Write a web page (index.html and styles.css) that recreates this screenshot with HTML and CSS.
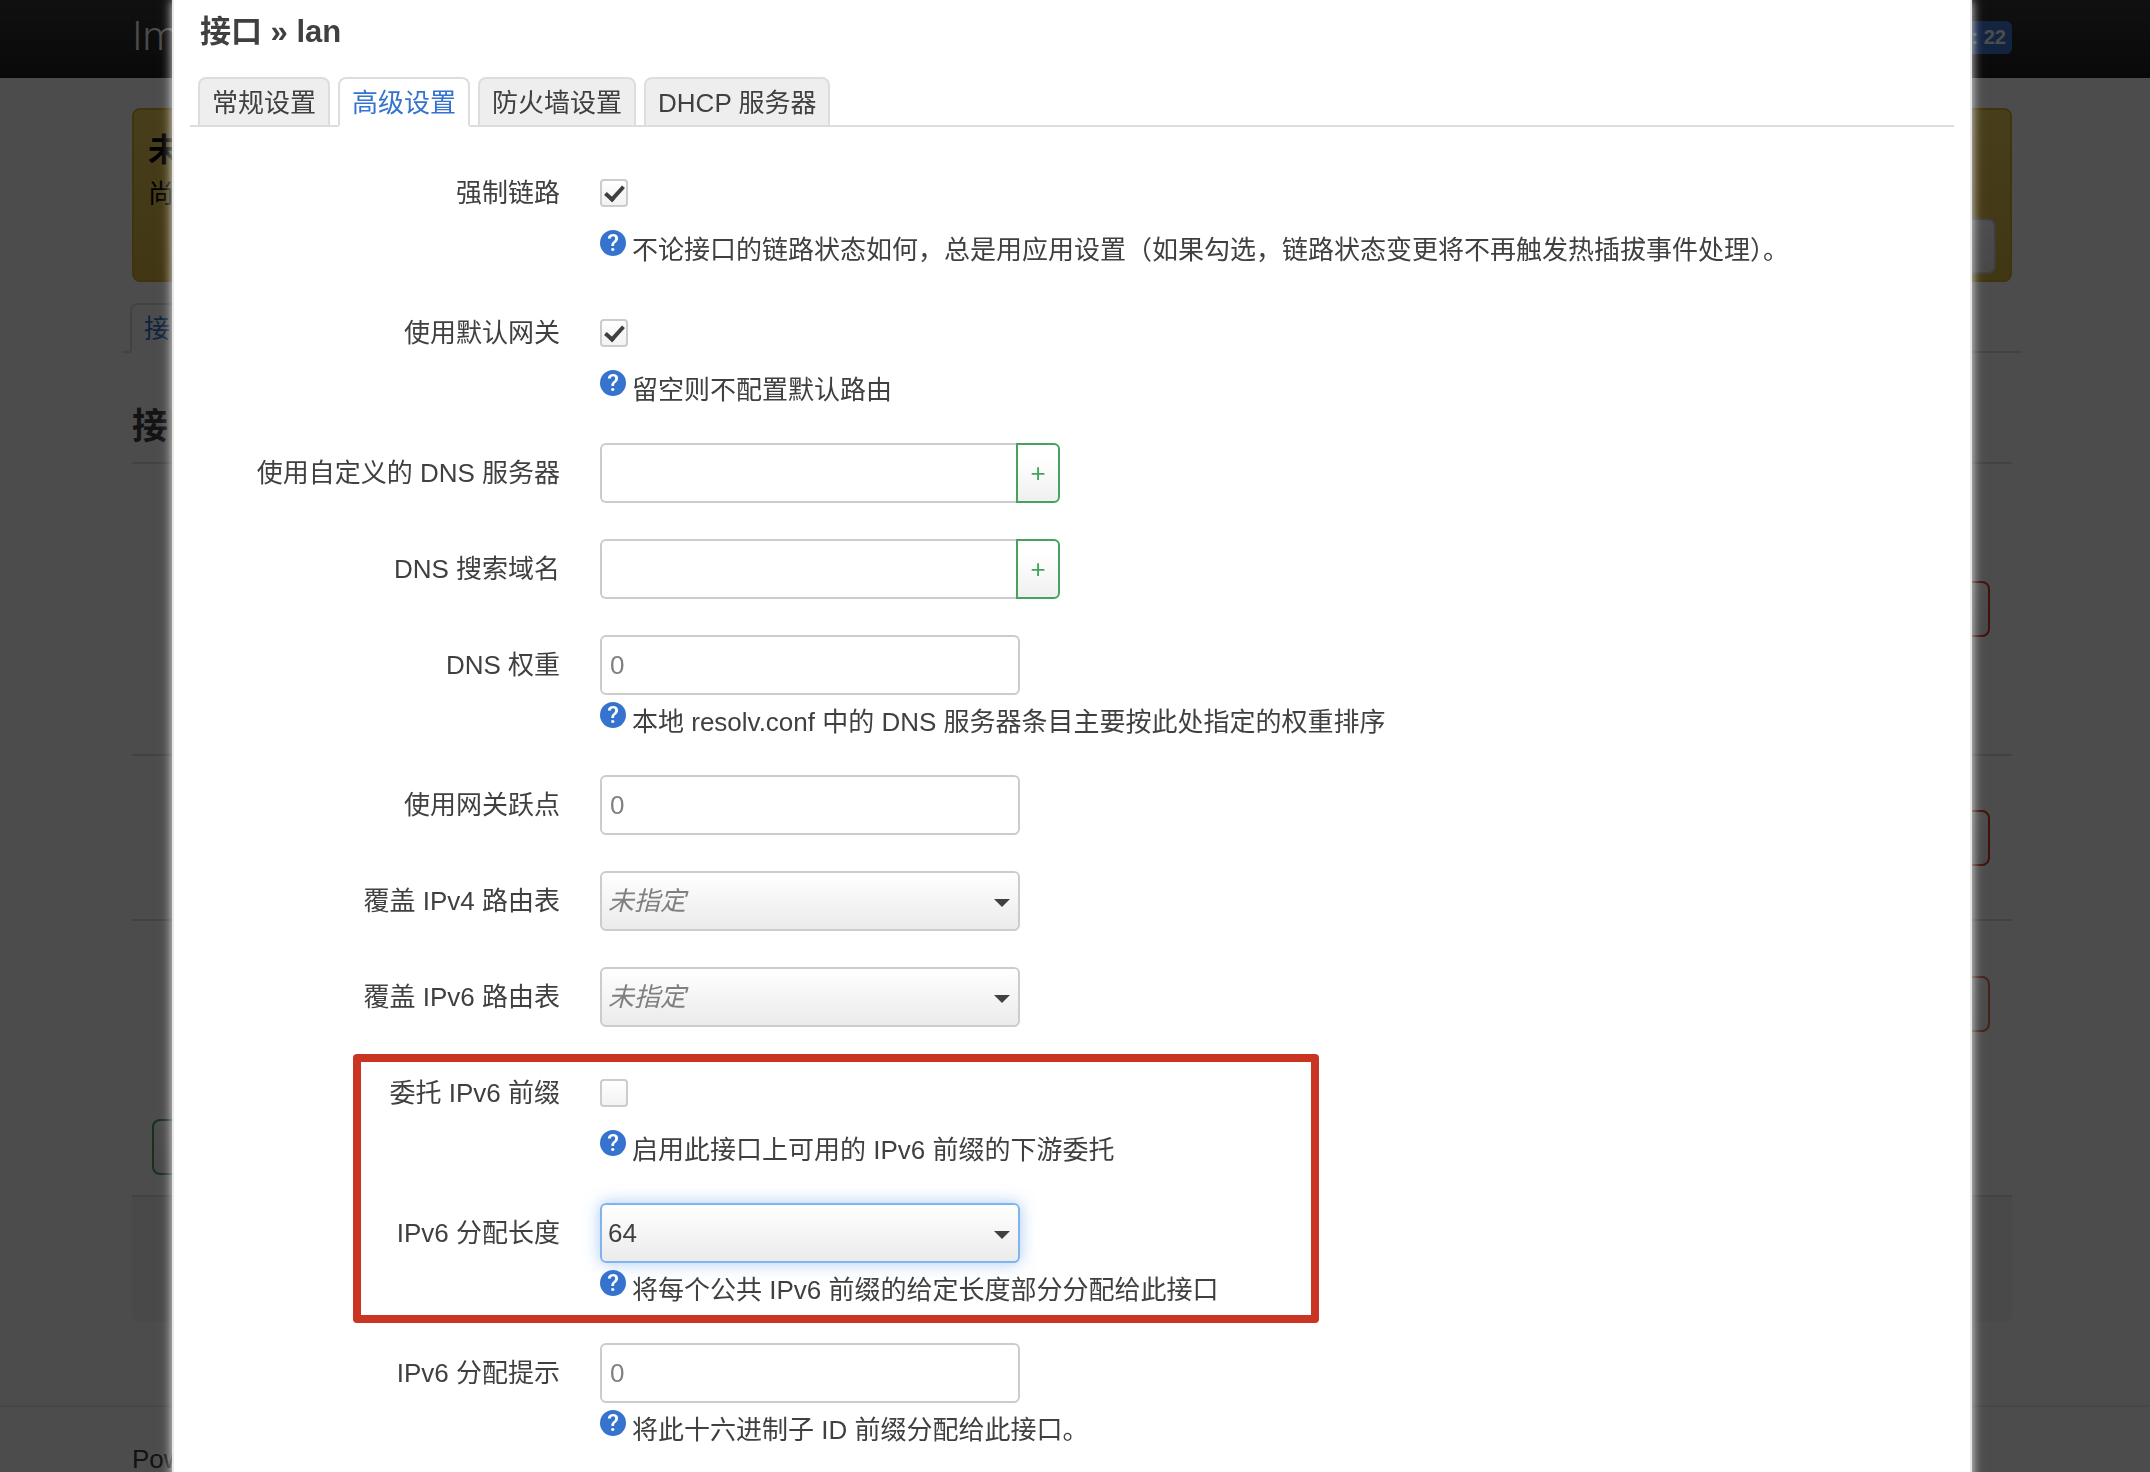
FILE: index.html
```html
<!DOCTYPE html>
<html lang="zh-CN">
<head>
  <meta charset="UTF-8" />
  <meta name="viewport" content="width=device-width, initial-scale=1.0" />
  <title>接口 - LuCI</title>
  <link rel="stylesheet" href="styles.css">
</head>
<body>
  <header class="topbar">
    <a class="brand" href="#">ImmortalWrt</a>
    <a class="badge" href="#">未保存的配置: 22</a>
  </header>

  <main class="page">
    <div class="notice">
      <h4>未设置密码！</h4>
      <p>尚未设置密码。</p>
      <div class="right"><button class="btn">转到密码配置页</button></div>
    </div>

    <ul class="tabs page-tabs">
      <li class="active"><a href="#">接口</a></li>
    </ul>

    <h2>接口</h2>
    <div class="iface tall"><button class="btn remove">删除</button></div>
    <div class="iface"><button class="btn remove">删除</button></div>
    <div class="iface last"><button class="btn remove" disabled>删除</button></div>
    <div class="create"><button class="btn add">添加新接口…</button></div>
    <div class="page-actions"></div>
  </main>
  <footer class="footer">Powered by LuCI</footer>

  <div class="overlay">
    <div class="modal" role="dialog" aria-labelledby="modal-title">
      <h4 id="modal-title">接口 » lan</h4>
      <ul class="tabs">
        <li><a href="#">常规设置</a></li>
        <li class="active"><a href="#">高级设置</a></li>
        <li><a href="#">防火墙设置</a></li>
        <li><a href="#">DHCP 服务器</a></li>
      </ul>

      <form class="form">
        <div class="row">
          <label for="force_link">强制链路</label>
          <div class="field">
            <div class="check"><input type="checkbox" id="force_link" checked></div>
            <div class="hint"><span class="help">?</span><span>不论接口的链路状态如何，总是用应用设置（如果勾选，链路状态变更将不再触发热插拔事件处理）。</span></div>
          </div>
        </div>
        <div class="row">
          <label for="defaultroute">使用默认网关</label>
          <div class="field">
            <div class="check"><input type="checkbox" id="defaultroute" checked></div>
            <div class="hint"><span class="help">?</span><span>留空则不配置默认路由</span></div>
          </div>
        </div>
        <div class="row">
          <label for="dns">使用自定义的 DNS 服务器</label>
          <div class="field">
            <div class="list"><input type="text" id="dns"><button type="button" aria-label="添加">+</button></div>
          </div>
        </div>
        <div class="row">
          <label for="dns_search">DNS 搜索域名</label>
          <div class="field">
            <div class="list"><input type="text" id="dns_search"><button type="button" aria-label="添加">+</button></div>
          </div>
        </div>
        <div class="row">
          <label for="dns_metric">DNS 权重</label>
          <div class="field">
            <input type="text" id="dns_metric" placeholder="0">
            <div class="hint"><span class="help">?</span><span>本地 resolv.conf 中的 DNS 服务器条目主要按此处指定的权重排序</span></div>
          </div>
        </div>
        <div class="row">
          <label for="metric">使用网关跃点</label>
          <div class="field"><input type="text" id="metric" placeholder="0"></div>
        </div>
        <div class="row">
          <label for="ip4table">覆盖 IPv4 路由表</label>
          <div class="field">
            <div class="select"><select id="ip4table" class="unset"><option>未指定</option></select></div>
          </div>
        </div>
        <div class="row">
          <label for="ip6table">覆盖 IPv6 路由表</label>
          <div class="field">
            <div class="select"><select id="ip6table" class="unset"><option>未指定</option></select></div>
          </div>
        </div>

        <div class="marked">
          <div class="row">
            <label for="delegate">委托 IPv6 前缀</label>
            <div class="field">
              <div class="check"><input type="checkbox" id="delegate"></div>
              <div class="hint"><span class="help">?</span><span>启用此接口上可用的 IPv6 前缀的下游委托</span></div>
            </div>
          </div>
          <div class="row">
            <label for="ip6assign">IPv6 分配长度</label>
            <div class="field">
              <div class="select"><select id="ip6assign" class="focused"><option>64</option></select></div>
              <div class="hint"><span class="help">?</span><span>将每个公共 IPv6 前缀的给定长度部分分配给此接口</span></div>
            </div>
          </div>
        </div>

        <div class="row">
          <label for="ip6hint">IPv6 分配提示</label>
          <div class="field">
            <input type="text" id="ip6hint" placeholder="0">
            <div class="hint"><span class="help">?</span><span>将此十六进制子 ID 前缀分配给此接口。</span></div>
          </div>
        </div>
      </form>
    </div>
  </div>
</body>
</html>
```
FILE: styles.css
```css
*, *::before, *::after {
  box-sizing: border-box;
}
body {
  margin: 0;
  overflow: hidden;
  background: #fff;
  color: #404040;
  font-family: "Liberation Sans", "Noto Sans CJK SC", sans-serif;
  font-size: 26px;
  line-height: 36px;
}
h2, h4, p, ul {
  margin: 0;
  padding: 0;
}
a {
  color: #3573cf;
  text-decoration: none;
}
input, select, button {
  font: inherit;
  color: inherit;
}

/* page behind the dialog */
.topbar {
  display: flex;
  justify-content: space-between;
  align-items: center;
  height: 78px;
  padding: 0 138px 4px 132px;
  background: linear-gradient(#383838, #202020);
}
.brand {
  color: #fff;
  font-family: Roboto, sans-serif;
  font-size: 40px;
  font-weight: 300;
}
.badge {
  padding: 0 6px;
  border-radius: 6px;
  background: #3c78d8;
  color: #fff;
  font-size: 20px;
  font-weight: bold;
  line-height: 33px;
}
.page {
  padding: 30px 138px 0 132px;
}
.notice {
  height: 174px;
  padding: 20px 14px 0;
  border: 2px solid #d8b032;
  border-radius: 8px;
  background: linear-gradient(#f0cf5e, #dcb740);
  color: #000;
}
.notice h4 {
  font-size: 32px;
  line-height: 40px;
}
.notice p {
  line-height: 48px;
}
.right {
  display: flex;
  justify-content: flex-end;
}
.btn {
  height: 56px;
  padding: 0 26px;
  border: 2px solid #ccc;
  border-radius: 8px;
  background: linear-gradient(#fff, #eee);
}
.btn.remove {
  border-color: #d9381e;
  color: #d9381e;
}
.btn.remove:disabled {
  opacity: .7;
}
.btn.add {
  border-color: #46a35e;
  color: #46a35e;
}
.page-tabs {
  margin: 21px -10px 0;
}
.page h2 {
  padding: 52px 0 13px;
  border-bottom: 2px solid #ddd;
  font-size: 36px;
  line-height: 44px;
}
.iface {
  display: flex;
  align-items: center;
  justify-content: flex-end;
  height: 165px;
  padding-right: 22px;
  border-bottom: 2px solid #ddd;
}
.iface.tall {
  height: 292px;
}
.iface.last {
  border-bottom: 0;
}
.create {
  padding: 33px 20px 20px;
  border-bottom: 2px solid #ddd;
}
.page-actions {
  height: 125px;
  border-radius: 0 0 6px 6px;
  background: #f3f3f3;
}
.footer {
  margin-top: 83px;
  padding: 34px 138px 34px 132px;
  border-top: 2px solid #eaeaea;
  white-space: nowrap;
}

/* tabs */
.tabs {
  display: flex;
  gap: 8px;
  padding: 0 8px;
  border-bottom: 2px solid #ddd;
  list-style: none;
}
.tabs li {
  margin-bottom: -2px;
}
.tabs a {
  display: block;
  height: 50px;
  padding: 0 12px;
  border: 2px solid #ddd;
  border-radius: 8px 8px 0 0;
  background: #eee;
  color: #404040;
  line-height: 48px;
}
.tabs .active a {
  border-bottom-color: #fff;
  background: #fff;
  color: #3573cf;
}

/* dialog */
.overlay {
  position: fixed;
  inset: 0;
  overflow: hidden;
  background: rgba(0, 0, 0, .7);
}
.modal {
  min-height: 100%;
  margin: 0 178px 0 172px;
  padding: 0 16px;
  border: solid #e8e8e8;
  border-width: 0 2px;
  background: #fff;
  box-shadow: 0 0 10px rgba(255, 255, 255, .9);
}
.modal h4 {
  padding: 0 10px 13px;
  font-size: 31px;
  line-height: 64px;
}
.form {
  padding-top: 36px;
}
.row {
  display: flex;
  gap: 40px;
  padding-bottom: 36px;
}
.row label {
  flex: 0 0 370px;
  line-height: 60px;
  text-align: right;
}
.field {
  flex: 1;
}
.field input[type="text"], .select {
  display: block;
  width: 420px;
  height: 60px;
}
.field input[type="text"] {
  padding: 0 8px;
  border: 2px solid #ccc;
  border-radius: 6px;
  background: #fff;
  outline: none;
}
.field input::placeholder {
  color: #808080;
}
.list {
  display: flex;
}
.list input[type="text"] {
  width: 416px;
  border-right: 0;
  border-radius: 6px 0 0 6px;
}
.list button {
  width: 44px;
  height: 60px;
  padding: 0;
  border: 2px solid #46a35e;
  border-radius: 0 6px 6px 0;
  background: linear-gradient(#fff, #fff 25%, #f0f0f0);
  color: #46a35e;
}
.select {
  position: relative;
}
.select::after {
  content: "";
  position: absolute;
  top: 28px;
  right: 10px;
  border: 8px solid transparent;
  border-top-color: #404040;
  border-bottom: 0;
  pointer-events: none;
}
.select select {
  width: 100%;
  height: 60px;
  padding: 0 30px 0 6px;
  border: 2px solid #ccc;
  border-radius: 6px;
  background: linear-gradient(#fff, #ebebeb);
  appearance: none;
  outline: none;
}
.select .unset {
  color: #808080;
  font-style: italic;
}
.select .focused {
  border-color: #80b4ee;
  box-shadow: 0 0 16px rgba(82, 152, 236, .5);
}
.check {
  display: flex;
  align-items: center;
  height: 60px;
}
.check input {
  display: grid;
  place-content: center;
  width: 28px;
  height: 28px;
  margin: 0;
  border: 2px solid #ccc;
  border-radius: 4px;
  background: linear-gradient(#fff, #f2f2f2);
  appearance: none;
}
.check input:checked::after {
  content: "";
  width: 11px;
  height: 19px;
  margin-bottom: 4px;
  border: solid #404040;
  border-width: 0 4px 4px 0;
  transform: rotate(42deg);
}
.hint {
  display: flex;
  gap: 6px;
  height: 44px;
  padding-top: 7px;
  line-height: 40px;
}
.help {
  flex: none;
  width: 26px;
  height: 26px;
  border-radius: 50%;
  background: #3573cf;
  color: #fff;
  font-family: Roboto, sans-serif;
  font-size: 24px;
  font-weight: 500;
  line-height: 27px;
  text-align: center;
}

/* red frame round the two IPv6 prefix options */
.marked {
  position: relative;
}
.marked::after {
  content: "";
  position: absolute;
  top: -9px;
  left: 163px;
  width: 966px;
  height: 269px;
  border: 8px solid #ca3423;
  border-radius: 4px;
  pointer-events: none;
}
```
